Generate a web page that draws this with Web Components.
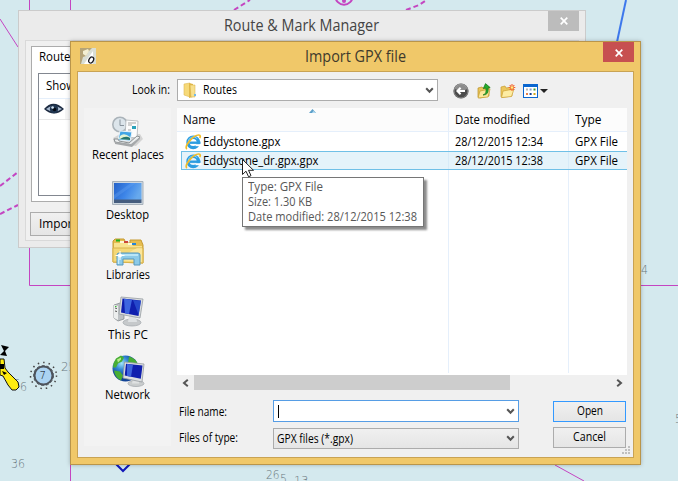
<!DOCTYPE html>
<html lang="en"><head><meta charset="utf-8"><title>Import GPX file</title>
<style>
body{margin:0;width:678px;height:481px;overflow:hidden;font:12px/16px "Open Sans","Noto Sans",sans-serif;color:#000}
</style></head><body>
<chart-desktop></chart-desktop>
<script>
const define = (name, html, init) => customElements.define(name, class extends HTMLElement {
  connectedCallback() {
    if (!this.shadowRoot) this.attachShadow({mode: 'open'}).innerHTML = html;
    if (init) init(this, this.shadowRoot);
  }
});

// A single line of text set to an exact width.
customElements.define('fit-text', class extends HTMLElement {
  connectedCallback() {
    if (this.shadowRoot) return;
    const r = this.attachShadow({mode: 'open'});
    r.innerHTML = '<style>:host{display:block;flex:none;white-space:pre;text-align:left}span{display:inline-block;transform-origin:0 0}</style><span></span>';
    const s = r.querySelector('span');
    s.textContent = this.getAttribute('t');
    const w = +this.getAttribute('w');
    this.style.width = w + 'px';
    s.style.transform = `scaleX(${w / s.getBoundingClientRect().width})`;
  }
});

const icons = {
folder:[16,16,`<path d="M1 2l6-1v14l-6-2z" fill="#f6d978" stroke="#dfba55" stroke-width=".6"/><path d="M6 1l4 1v13l-4 1z" fill="#e2b94b"/><path d="M7 3l5 0v12l-4 0z" fill="#f7e08e" stroke="#d5ad43" stroke-width=".5"/><path d="M11 12h2v2h-2z" fill="#71b8e8"/>`],
app:[16,16,`<path d="M0 0h16v16H0z" fill="#d9ded5"/><path d="M0 0h12L8 4 6 8 3 9 1 16H0z" fill="#b5a477"/><path d="M3 3l5-2 1 2-3 5-3-2z" fill="#f3efd2"/><path d="M4 16L13 3v13z" fill="#fff"/><ellipse cx="11.2" cy="12" rx="2.2" ry="3.2" transform="rotate(30 11.2 12)" fill="none" stroke="#17171d" stroke-width="1.2"/>`],
ie:[16,16,`<circle cx="8.2" cy="8.4" r="5.2" fill="none" stroke="#2c9de0" stroke-width="3.4"/><path d="M5 8.7h10.5" stroke="#2c9de0" stroke-width="2.4"/><path d="M10.5 10.2h6v2h-6z" fill="#fff"/><path d="M3.2 8a5.2 5.2 0 0 1 9-3.4" fill="none" stroke="#8bd5fa" stroke-width="1"/><path d="M2 15C-1.8 12.8 8.5.8 13.8 1c2 .1 1.6 2 .9 3" fill="none" stroke="#f2bd28" stroke-width="1.7"/>`],
eye:[20,12,`<path d="M0 6Q9-4.5 20 6 10 15 0 6z" fill="#1c2a40"/><path d="M2 6Q9 0 18 6 10 11 2 6z" fill="#a9bbd1"/><circle cx="10" cy="6" r="4.2" fill="#1f3550"/><circle cx="10.5" cy="6.5" r="1.8" fill="#030912"/><circle cx="8.6" cy="4.5" r="1.3" fill="#d5e6f5"/>`],
close:[8,8,`<path d="M.7.7l6.6 6.6M7.3.7L.7 7.3" stroke="#fff" stroke-width="1.7"/>`],
chev:[9,7,`<path d="M1.2 1.2L4.5 4.7 7.8 1.2" fill="none" stroke="#555" stroke-width="2"/>`],
left:[7,8,`<path d="M5.8.8L2 4l3.8 3.2" fill="none" stroke="#555" stroke-width="2"/>`],
right:[7,8,`<path d="M1.2.8L5 4 1.2 7.2" fill="none" stroke="#555" stroke-width="2"/>`],
sort:[7,4,`<path d="M3.5 0L7 4H0z" fill="#5c9fc9"/><path d="M4.3 2L7 4H3z" fill="#b6ddf2"/>`],
back:[16,16,`<circle cx="8" cy="8" r="7.6" fill="#4b4b4b"/><path d="M1.5 6a6.7 6.7 0 0 1 13 0q-6 3-13 0z" fill="#8c8c8c"/><circle cx="8" cy="8" r="6.9" fill="none" stroke="#aaa" stroke-width=".6"/><path d="M12 8H4.6M7.6 4.7L4.4 8l3.2 3.3" fill="none" stroke="#fff" stroke-width="2"/>`],
up:[14,16,`<path d="M1 5l4-1 1 1 6-1v9l-9 2-2-1z" fill="#e9c45a" stroke="#b99025" stroke-width=".7"/><path d="M3 8l10-2-2 8-10 1z" fill="#fbe89a" stroke="#c69d31" stroke-width=".7"/><path d="M6 12q4-1 2.8-7L6.3 5.6 8.5.6l4.7 4-2.2.4q1.2 7-5 7z" fill="#25ab2b" stroke="#127419" stroke-width=".7"/>`],
newf:[16,14,`<path d="M1 3l4-1 1 2 6-1v9l-10 1.5-1-1z" fill="#ecc75c" stroke="#c79d30" stroke-width=".7"/><path d="M3 7l11-2-2.5 7.5L1.5 13.6z" fill="#fdeca2" stroke="#cba036" stroke-width=".7"/><path d="M12 0v7M8.7 3.500h6.600M9.700 1.200l4.600 4.600M14.300 1.200L9.700 5.800" stroke="#f4622b" stroke-width="1.1"/><circle cx="12" cy="3.500" r="1.300" fill="#fff083"/>`],
view:[15,14,`<path d="M0 0h15v14H0z" fill="#0a66cf"/><path d="M1 3h13v10H1z" fill="#fff"/><path d="M3 4.500h2v2H3z" fill="#b5b5b5"/><path d="M6.600 4.500h2v2h-2z" fill="#849bc9"/><path d="M10.500 4.500h2v2h-2z" fill="#35962e"/><path d="M3 9h2v2H3z" fill="#e4804b"/><path d="M6.600 9h2v2h-2z" fill="#153d91"/><path d="M10.500 9h2v2h-2z" fill="#d5a519"/>`],
tri:[8,4,`<path d="M0 0h8L4 4z" fill="#222"/>`],
recent:[32,32,`<path d="M1 22l7-4h20l3 5-7 7-22-3z" fill="#9a9c9c" opacity=".35"/><circle cx="8" cy="8.500" r="7.200" fill="#dce5eb" stroke="#aab3b9" stroke-width="1.600"/><path d="M8 3.500v6h4" fill="none" stroke="#89949d" stroke-width="1"/><path d="M14 4l12 1-1 17-12-1z" fill="#fcfcfc" stroke="#aeb4b8" stroke-width=".8"/><path d="M16 7h8M16 9h4M16 14h3M16 17h3" stroke="#a6a6a6"/><path d="M20 10h4v3h-4z" fill="#29a2bb"/><path d="M8 15l12 1-2 9-12-1z" fill="#41a5e6" stroke="#e8f3fa"/><path d="M8 20q4-4 10 1l-1 3-10-1z" fill="#e3f3d4"/><path d="M8 23q6-4 10-1v2z" fill="#25756c"/><path d="M2 23l4 0 1 2 10 2 8-7 3 1-8 8-17-3z" fill="#ebedee" stroke="#777d80" stroke-width=".8"/><path d="M3 26l16 2 9-7v2l-8 8-17-3z" fill="#a5a8aa"/>`],
desktop:[32,32,`<defs><linearGradient id="d" x2="1" y2=".3"><stop stop-color="#2462c9"/><stop offset=".55" stop-color="#3d85e8"/><stop offset="1" stop-color="#67a9ed"/></linearGradient></defs><path d="M.5 5.500h30.500v23H.5z" fill="#cdd7df" stroke="#a7b1bb"/><path d="M2 7h27.500v17H2z" fill="url(#d)"/><path d="M2 19L19 7h5L2 23z" fill="#68a4f1" opacity=".35"/><path d="M2 23.500h27.500V27H2z" fill="#465d7e"/>`],
libs:[32,32,`<path d="M1 26V5l2-2h9l2 4h4V4h11l2 5v18z" fill="#e6bd50" stroke="#c69a31"/><path d="M2 26V7h17l2 3h9v17z" fill="#f8e38f"/><path d="M1 26V12h30v15z" fill="#f4d877" stroke="#d9b24b"/><path d="M3 24L25 12h5v14z" fill="#ffeeb0" opacity=".6"/><path d="M8 5h4v2H8zM16 7h4v2h-4z" fill="#fff8d5"/><path d="M4 3.500h4v2H4z" fill="#20b31e"/><path d="M12 5h4v2h-4z" fill="#cb4639"/><path d="M20 7h4v2h-4z" fill="#2685d8"/><path d="M5 29V19q0-2 2-2h19q2 0 2 2v10h-6v-6H11v6z" fill="#8ccae8" stroke="#5797bc"/><path d="M6.500 28v-9H26" fill="none" stroke="#c8eefc" stroke-width="1.400"/><path d="M8 15v9M3.500 19.500h9" stroke="#fff" stroke-width="1"/><circle cx="8" cy="19.500" r="2" fill="#fff"/>`],
pc:[32,32,`<ellipse cx="20" cy="26.500" rx="9" ry="3.500" fill="#c6c9cb" stroke="#a1a6aa" stroke-width=".7"/><path d="M17 20h7l1 6h-9z" fill="#dfe2e4"/><path d="M2 9l6-2 4 1v15l-6 2-4-3z" fill="#bdc1c4" stroke="#7e8488" stroke-width=".7"/><path d="M2 9l4 1v14l-4-2z" fill="#eceeee"/><path d="M3 12l2 .5M3 15l2 .5" stroke="#555"/><path d="M3 10h1.500v1H3z" fill="#35c22c"/><path d="M9 1l22 2-3 19L7 18z" fill="#dadddf" stroke="#979da2" stroke-width=".8"/><path d="M10.500 2.500L29 4.500 26.500 20 9 16.500z" fill="#101fae"/><path d="M12 2.700l8 1L17 18l-4-.8z" fill="#3e66df"/><path d="M21 4l8 .7L26.600 19z" fill="#2f5ad6" opacity=".7"/>`],
net:[32,33,`<defs><radialGradient id="n" cx=".35" cy=".3"><stop stop-color="#a0e5fb"/><stop offset=".5" stop-color="#3187d4"/><stop offset="1" stop-color="#124396"/></radialGradient></defs><g transform="translate(0 -1.500)"><circle cx="13.500" cy="14" r="13" fill="url(#n)"/><path d="M4 4l5-3 3 2-2 4-4 2-2 4-3 0q0-5 3-9zM17 2q7 2 9 8l-4 2-3-4-3 1zM2 16l6 1 3 4-2 5Q3 23 2 16z" fill="#48ae34"/><path d="M5 5l4-2 0 2-3 3z" fill="#b7ec8b"/><ellipse cx="24" cy="29" rx="8" ry="3" fill="#c9cccd" stroke="#9fa4a7" stroke-width=".7"/><path d="M21 24h6v5h-7z" fill="#dfe1e2"/><path d="M12.500 7.500l19.500 2-2 18-19-4z" fill="#dcdfe0" stroke="#959ba0" stroke-width=".8"/><path d="M14 9.300l16.500 1.800-1.700 13.200L12.700 21z" fill="#101fae"/><path d="M15 9.500l6 .7-2 12-4-.8z" fill="#3d63dc"/></g>`]
};
define('px-icon','', (el,r)=>{const [w,h,p]=icons[el.getAttribute('n')];
r.innerHTML=`<style>:host{display:block;flex:none;width:${w}px;height:${h}px}svg{display:block;overflow:visible}</style><svg width="${w}" height="${h}" viewBox="0 0 ${w} ${h}">${p}</svg>`});

define('chart-map', `<style>:host{display:block;width:678px;height:481px;background:#d4e9ee}svg{display:block}
text{font:12.5px "DejaVu Sans",sans-serif;font-weight:200;fill:#6b7a81}</style>
<svg width="678" height="481"><g fill="none" stroke="#c445c1" stroke-width="1">
<path d="M29.500 0V10M70.500 0V10M0 19L18 47M29.500 247V285.500H70M641 285.500H678M70.500 465V481M555 465L584 481" />
<g stroke-width="2"><path d="M234 10l16-10M406 10l13-5 6-4" stroke-dasharray="5 3"/><circle cx="344" cy="-4" r="8.700"/><path d="M0 186L18 172M0 214L18 205" stroke-dasharray="5 3"/></g></g><circle cx="344" cy="1" r="2" fill="#c445c1"/>
<path d="M626 0L617 42" stroke="#3d78ec" stroke-width="2"/>
<path d="M115 463l8 8 8-8" fill="none" stroke="#1117b8" stroke-width="2"/>
<text x="11" y="468" textLength="14" lengthAdjust="spacingAndGlyphs">36</text><text x="61" y="371" textLength="15" lengthAdjust="spacingAndGlyphs">25</text>
<text x="13" y="388" textLength="7" lengthAdjust="spacingAndGlyphs">6</text><text x="20" y="391" textLength="7" lengthAdjust="spacingAndGlyphs">6</text>
<text x="266" y="479" textLength="13.500" lengthAdjust="spacingAndGlyphs">26</text><text x="280" y="483" textLength="7" lengthAdjust="spacingAndGlyphs">5</text><text x="294" y="485" textLength="18" lengthAdjust="spacingAndGlyphs">13.</text>
<text x="641" y="274" textLength="7" lengthAdjust="spacingAndGlyphs">4</text><text x="675" y="423" textLength="7" lengthAdjust="spacingAndGlyphs">5</text>
<path d="M1 345l8 2-4 4 2 5-7-1 4-4zM0 360h3v4H0z"/><path d="M0 359l4 0 1 9 3 4 10 10 1 5-3 3h-4l-4-5-5-9-3-1z" fill="#ffed10" stroke="#111"/><path d="M0 364h4v5H0zM2 371l5 2-3 2z"/>
<circle cx="43.500" cy="375.500" r="13" fill="none" stroke="#444" stroke-width="1.500" stroke-dasharray="1.500 4"/><circle cx="43.500" cy="375.500" r="9" fill="#abd3f2" stroke="#4d535b" stroke-width="2"/><circle cx="43.500" cy="375.500" r="10" fill="none" stroke="#4d535b" stroke-dasharray="3 2"/>
<text x="39.500" y="379" style="font-size:10px;fill:#000">7</text></svg>`);

define('manager-window', `<style>
:host{display:block;box-sizing:border-box;width:568px;height:238px;border:1px solid #cbcbcb;background:#ebebeb}
.bar{display:grid;grid-template-columns:1fr 31px;height:29px;margin-right:6px}
.title{font-size:16px;line-height:28px;color:#444;padding-left:205px}
.x{height:20px;background:#bcbcbc;display:grid;place-items:center}
.body{margin:0 6px;height:199px;border:1px solid #d9d9d9;background:#f0f0f0}
.tab{margin:5px 5px 0;box-sizing:border-box;height:156px;border:1px solid #acacac;background:#fff;padding:2px 6px 6px}
.tab>fit-text{padding-left:1px;height:24px}
.list{box-sizing:border-box;height:123px;border:1px solid #828790}
.h{height:24px;border-bottom:1px solid #e5effb;padding-left:7px;display:flex;align-items:center}
.r{height:20px;border-bottom:1px solid #e8e8e8;display:grid;grid-template-columns:26px 1fr;align-items:center}.r px-icon{margin-left:5px}.r i{background:#f5f5f5;height:20px}
.btn{margin:10px 0 0 4px;box-sizing:border-box;width:90px;height:24px;border:1px solid #acacac;background:linear-gradient(#f0f0f0,#e5e5e5);padding:3px 8px}
</style><div class="bar"><div class="title"><fit-text t="Route &amp; Mark Manager" w="155"></fit-text></div><div class="x"><px-icon n="close"></px-icon></div></div>
<div class="body"><div class="tab"><fit-text t="Routes" w="37"></fit-text><div class="list"><div class="h"><fit-text t="Show" w="29"></fit-text></div><div class="r"><px-icon n="eye"></px-icon><i></i></div></div></div><div class="btn"><fit-text t="Import..." w="47"></fit-text></div></div>`);

define('combo-box', `<style>:host{box-sizing:border-box;height:22px;border:1px solid #acacac;background:#fff;display:flex;align-items:center;padding-right:3px}.s{flex:1;display:flex;align-items:center}</style><div class="s"><slot></slot></div><px-icon n="chev"></px-icon>`);
define('push-button', `<style>:host{box-sizing:border-box;height:21px;border:1px solid #acacac;background:linear-gradient(#f0f0f0,#e5e5e5);display:grid;justify-items:center;align-items:start;padding-top:1px}</style><slot></slot>`);
define('place-item', `<style>:host{height:60px;display:grid;grid-template-rows:31px 16px;justify-items:center;align-items:start}</style><slot></slot>`);
define('file-row', `<style>:host{height:19px;box-sizing:border-box;display:grid;grid-template-columns:267px 120px 1fr;align-items:center;margin-left:4px}
:host([sel]){border:1px solid #70c0e7;border-right:0;background:rgba(203,232,246,.5);padding:1px 1px 0 0}
:host([sel]) .n{padding-left:3px}:host([sel]) .d{padding-left:6px}:host([sel]) .g{padding-left:6px}
.n{display:flex;align-items:center;padding-left:4px;gap:2px}.d,.g{padding-left:7px}</style>
<div class="n"></div><div class="d"></div><div class="g"></div>`,
(el,r)=>{const f=(t,w)=>`<fit-text t="${t}" w="${w}"></fit-text>`;
r.querySelector('.n').innerHTML='<px-icon n="ie"></px-icon>'+f(el.getAttribute('name'),el.getAttribute('w'));
r.querySelector('.d').innerHTML=f(el.getAttribute('date'),88);r.querySelector('.g').innerHTML=f('GPX File',43)});

define('file-list', `<style>:host{display:block;width:450px;height:282px}
.area{height:267px;background:linear-gradient(#e5effb,#e5effb) 271px 0/1px 265px no-repeat,linear-gradient(#e5effb,#e5effb) 391px 0/1px 265px no-repeat,linear-gradient(#fcfcfc,#fcfcfc) 0 0/100% 23px no-repeat,#fff}
.h{height:24px;box-sizing:border-box;border-bottom:1px solid #e5effb;display:grid;grid-template-columns:272px 120px 1fr;padding-left:6px}
.h>div{padding-top:4px}.name{display:grid;grid-template-columns:126px 1fr}.name px-icon{margin-top:-3px}
.scroll{height:15px;background:#f0f0f0;display:flex;align-items:center;padding:0 4px 0 5px}
.thumb{width:316px;height:15px;background:#cdcdcd;margin-left:5px}.gap{flex:1}</style>
<div class="area"><div class="h"><div class="name"><fit-text t="Name" w="32.5"></fit-text><px-icon n="sort"></px-icon></div><div><fit-text t="Date modified" w="75"></fit-text></div><div><fit-text t="Type" w="26.500"></fit-text></div></div>
<file-row name="Eddystone.gpx" w="77.500" date="28/12/2015 12:34"></file-row><file-row sel name="Eddystone_dr.gpx.gpx" w="115.500" date="28/12/2015 12:38"></file-row></div>
<div class="scroll"><px-icon n="left"></px-icon><div class="thumb"></div><div class="gap"></div><px-icon n="right"></px-icon></div>`);

define('import-dialog', `<style>
:host{display:block;box-sizing:border-box;width:571px;height:424px;border:1px solid #b9954b;background:#f0c869;box-shadow:0 0 4px rgba(0,0,0,.25)}
.bar{display:grid;grid-template-columns:16px 1fr 31px;margin:0 6px 0 9px;height:29px}
.bar px-icon[n=app]{margin-top:6px}.title{font-size:16px;line-height:28px;color:#3f3a2c;padding-left:209px}.x{height:20px;background:#c75050;display:grid;place-items:center}
.x px-icon{margin-top:1px}
.client{box-sizing:border-box;margin:0 6px;width:557px;height:387px;border:1px solid #c9a354;background:#f0f0f0;padding:7px 6px 0}
.top{display:flex;height:29px;align-items:start}.top>fit-text{margin:3px 7px 0 48px}
.look{width:261px}.look px-icon{margin:0 4px 0 5px}.tools{display:flex;align-items:center;height:23px;margin-left:15px}
.mid{display:grid;grid-template-columns:87px 450px;column-gap:6px}
.places{box-sizing:border-box;height:338px;background:#f3f3f3;padding-top:8px}
.form{display:grid;grid-template-columns:94px 246px 34px 73px;margin:10px 0 0 2px;align-items:start}
.form>*{margin-bottom:5px}.form fit-text{margin-top:4px}.in{border-color:#569de5}.in i{width:1px;height:13px;background:#000;margin-left:4px}
.sel{background:linear-gradient(#f0f0f0,#e5e5e5);height:21px;margin-top:1px}.form .sel fit-text{margin:0 0 0 3px}
push-button{margin-top:1px}.ok{border-color:#3399ff}.form push-button fit-text{margin:0}
.can{margin-top:0}.form>fit-text:nth-of-type(2){margin-top:3px}.grip{display:block;width:9px;height:9px;margin:-8px -4px 0 auto}
</style>
<div class="bar"><px-icon n="app"></px-icon><div class="title"><fit-text t="Import GPX file" w="101"></fit-text></div><div class="x"><px-icon n="close"></px-icon></div></div>
<div class="client"><div class="top"><fit-text t="Look in:" w="38"></fit-text><combo-box class="look"><px-icon n="folder"></px-icon><fit-text t="Routes" w="34"></fit-text></combo-box>
<div class="tools"><px-icon n="back"></px-icon><px-icon n="up" style="margin-left:8px"></px-icon><px-icon n="newf" style="margin-left:9px"></px-icon><px-icon n="view" style="margin-left:7px"></px-icon><px-icon n="tri" style="margin-left:2px"></px-icon></div></div>
<div class="mid"><div class="places">
<place-item><px-icon n="recent"></px-icon><fit-text t="Recent places" w="72"></fit-text></place-item>
<place-item><px-icon n="desktop"></px-icon><fit-text t="Desktop" w="43"></fit-text></place-item>
<place-item><px-icon n="libs"></px-icon><fit-text t="Libraries" w="44"></fit-text></place-item>
<place-item><px-icon n="pc"></px-icon><fit-text t="This PC" w="40"></fit-text></place-item>
<place-item><px-icon n="net"></px-icon><fit-text t="Network" w="45"></fit-text></place-item></div>
<div><file-list></file-list><div class="form">
<fit-text t="File name:" w="48"></fit-text><combo-box class="in"><i></i></combo-box><span></span><push-button class="ok"><fit-text t="Open" w="26"></fit-text></push-button>
<fit-text t="Files of type:" w="59"></fit-text><combo-box class="sel"><fit-text t="GPX files (*.gpx)" w="76"></fit-text></combo-box><span></span><push-button class="can"><fit-text t="Cancel" w="33"></fit-text></push-button></div></div></div>
<svg class="grip" viewBox="0 0 9 9"><path d="M6 0h2v2H6zM3 3h2v2H3zM6 3h2v2H6zM0 6h2v2H0zM3 6h2v2H3zM6 6h2v2H6z" fill="#bfbfbf"/></svg></div>`);

define('file-tooltip', `<style>:host{display:block;box-sizing:border-box;width:182px;height:50px;background:#fff;border:1px solid #767676;box-shadow:3px 3px 2px rgba(0,0,0,.45);padding:1px 5px;color:#575757;line-height:15px}</style><fit-text t="Type: GPX File" w="75"></fit-text><fit-text t="Size: 1.30 KB" w="64"></fit-text><fit-text t="Date modified: 28/12/2015 12:38" w="169"></fit-text>`);

define('chart-desktop', `<style>:host{display:block;position:relative;width:678px;height:481px;overflow:hidden}
manager-window,import-dialog,file-tooltip,.cursor{position:absolute}manager-window{left:18px;top:10px}import-dialog{left:70px;top:41px}file-tooltip{left:242px;top:177px}.cursor{left:242px;top:159px}</style>
<chart-map></chart-map><manager-window></manager-window><import-dialog></import-dialog><file-tooltip></file-tooltip>
<svg class="cursor" width="13" height="19"><path d="M.5.5v15l3.500-3.300 2.600 5.600 2.400-1.200-2.500-5.300h5z" fill="#fff" stroke="#222"/></svg>`);
</script></body></html>
